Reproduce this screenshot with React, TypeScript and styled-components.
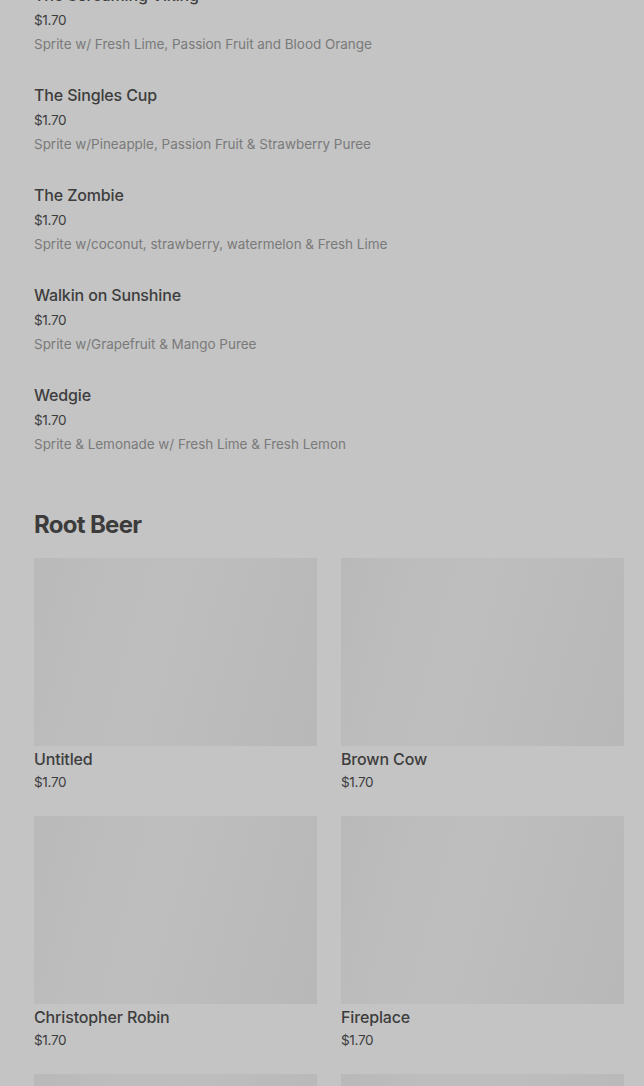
import styled, { createGlobalStyle } from 'styled-components';

interface Drink {
  name: string;
  price: string;
  description?: string;
}

const spriteDrinks: Drink[] = [
  { name: 'The Screaming Viking', price: '$1.70', description: 'Sprite w/ Fresh Lime, Passion Fruit and Blood Orange' },
  { name: 'The Singles Cup', price: '$1.70', description: 'Sprite w/Pineapple, Passion Fruit & Strawberry Puree' },
  { name: 'The Zombie', price: '$1.70', description: 'Sprite w/coconut, strawberry, watermelon & Fresh Lime' },
  { name: 'Walkin on Sunshine', price: '$1.70', description: 'Sprite w/Grapefruit & Mango Puree' },
  { name: 'Wedgie', price: '$1.70', description: 'Sprite & Lemonade w/ Fresh Lime & Fresh Lemon' },
];

const rootBeers: Drink[] = [
  { name: 'Untitled', price: '$1.70' },
  { name: 'Brown Cow', price: '$1.70' },
  { name: 'Christopher Robin', price: '$1.70' },
  { name: 'Fireplace', price: '$1.70' },
  { name: 'Float', price: '$1.70' },
  { name: 'Root Beer', price: '$1.70' },
];

const GlobalStyle = createGlobalStyle`
  html, body {
    margin: 0;
    padding: 0;
    background: #c4c4c4;
    overflow: hidden;
  }

  body {
    font-family: Inter, "Noto Sans", sans-serif;
    -webkit-font-smoothing: antialiased;
  }
`;

const Page = styled.main`
  padding: 0 20px 0 34px;
  margin-top: -17px;
`;

const List = styled.ul`
  list-style: none;
  margin: 0;
  padding: 0;
`;

const ListItem = styled.li`
  display: flex;
  flex-direction: column;
  padding-bottom: 29px;
`;

const Name = styled.span`
  font-size: 16px;
  font-weight: 500;
  line-height: 24px;
  color: #3d3d3d;
  letter-spacing: -0.15px;
`;

const Price = styled.span<{ $gap?: number }>`
  margin-top: ${({ $gap = 3 }) => $gap}px;
  font-size: 13.5px;
  line-height: 20px;
  color: #3d3d3d;
  letter-spacing: -0.3px;
`;

const Description = styled.span`
  margin-top: 4px;
  font-size: 13.5px;
  line-height: 20px;
  color: #7a7a7a;
  letter-spacing: -0.03px;
`;

const SectionTitle = styled.h2`
  margin: 26px 0 17px;
  font-size: 24px;
  font-weight: 700;
  line-height: 32px;
  color: #3c3c3c;
  letter-spacing: -0.7px;
`;

const Grid = styled.div`
  display: grid;
  grid-template-columns: repeat(2, 1fr);
  gap: 24px;
`;

const Card = styled.article`
  display: flex;
  flex-direction: column;
`;

const Placeholder = styled.div`
  height: 188px;
  margin-bottom: 1px;
  background: linear-gradient(
    105deg,
    #b9b9b9 0%,
    #bdbdbd 25%,
    #bebebe 45%,
    #bbbbbb 70%,
    #b8b8b8 100%
  );
`;

export default function App() {
  return (
    <>
      <GlobalStyle />
      <Page>
        <List>
          {spriteDrinks.map((drink) => (
            <ListItem key={drink.name}>
              <Name>{drink.name}</Name>
              <Price>{drink.price}</Price>
              <Description>{drink.description}</Description>
            </ListItem>
          ))}
        </List>
        <SectionTitle>Root Beer</SectionTitle>
        <Grid>
          {rootBeers.map((drink) => (
            <Card key={drink.name}>
              <Placeholder />
              <Name>{drink.name}</Name>
              <Price $gap={1}>{drink.price}</Price>
            </Card>
          ))}
        </Grid>
      </Page>
    </>
  );
}
